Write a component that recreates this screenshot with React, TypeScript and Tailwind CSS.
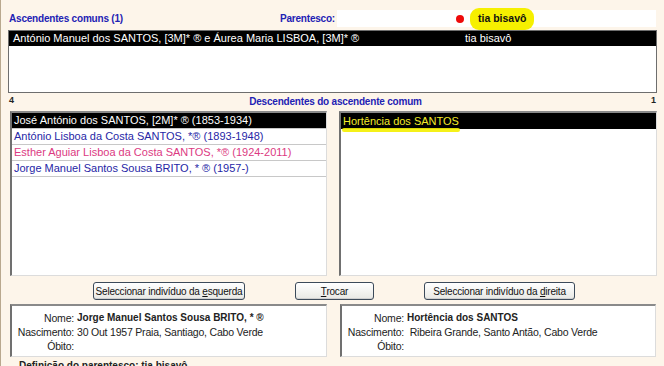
import React from "react";

const font = { fontFamily: '"Liberation Sans", Arial, sans-serif' };

function InfoBox({ name, birth }: { name: string; birth: string }) {
  return (
    <div className="flex h-[53px] flex-col border-l-2 border-t-2 border-r border-b border-l-[#707070] border-t-[#8a8a8a] border-r-[#dcdcdc] border-b-[#dcdcdc] bg-white pt-[5px] text-[10.5px] leading-[14px] tracking-[-0.2px] text-[#222]">
      <div className="flex">
        <span className="w-[62px] shrink-0 text-right">Nome:</span>
        <span className="pl-[3px] text-[10px] font-bold tracking-[0px]">{name}</span>
      </div>
      <div className="flex">
        <span className="w-[62px] shrink-0 text-right">Nascimento:</span>
        <span className="whitespace-pre pl-[3px]">{birth}</span>
      </div>
      <div className="flex">
        <span className="w-[62px] shrink-0 text-right">Óbito:</span>
      </div>
    </div>
  );
}

function Btn({ children, w }: { children: React.ReactNode; w: string }) {
  return (
    <div
      className={`${w} flex h-[18px] items-center justify-center whitespace-nowrap rounded-[3px] border border-[#3c4a5a] bg-gradient-to-b from-white to-[#e8e8e4] text-[10px] tracking-[-0.2px] text-[#111] shadow-[inset_0_-1px_0_#cfcfcf]`}
    >
      {children}
    </div>
  );
}

export default function App() {
  const rows = [
    { t: "José António dos SANTOS, [2M]* ® (1853-1934)", c: "text-white bg-black" },
    { t: "António Lisboa da Costa SANTOS, *® (1893-1948)", c: "text-[#2626a6] bg-white" },
    { t: "Esther Aguiar Lisboa da Costa SANTOS, *® (1924-2011)", c: "text-[#dc3a82] bg-white" },
    { t: "Jorge Manuel Santos Sousa BRITO, * ® (1957-)", c: "text-[#2626a6] bg-white" },
  ];
  return (
    <div
      style={font}
      className="relative h-[366px] w-[664px] overflow-hidden border-l border-l-[#b9a88e] bg-[#fdf5ea]"
    >
      {/* top row */}
      <div className="flex h-[27px] items-end">
        <div className="flex h-[17px] w-[336px] items-center justify-between pl-[8px] pr-[2px] text-[10px] font-bold tracking-[-0.2px] text-[#1e22b4]">
          <span>Ascendentes comuns (1)</span>
          <span>Parentesco:</span>
        </div>
        <div className="relative flex h-[17px] w-[319px] items-center bg-white pl-[119px]">
          <span className="h-[8px] w-[8px] rounded-full bg-[#ee0a0a]" />
          <span className="ml-[6px] flex h-[22px] items-center rounded-[9px] bg-[#f6f000] px-[8px] text-[10.5px] font-bold text-[#111]">
            tia bisavô
          </span>
        </div>
      </div>

      {/* top list */}
      <div className="mx-[7px] mt-[3px] h-[63px] border border-[#6e6e6e] bg-white">
        <div className="flex h-[15px] items-center bg-black text-[11px] text-white">
          <span className="w-[456px] shrink-0 whitespace-nowrap pl-[4px]">
            António Manuel dos SANTOS, [3M]* ® e Áurea Maria LISBOA, [3M]* ®
          </span>
          <span>tia bisavô</span>
        </div>
      </div>

      {/* label row */}
      <div className="mt-[1px] flex h-[14px] items-center justify-between px-[8px] text-[9px] font-bold">
        <span className="text-[#222]">4</span>
        <span className="ml-[6px] text-[10px] tracking-[-0.2px] text-[#1e22b4]">Descendentes do ascendente comum</span>
        <span className="text-[#222]">1</span>
      </div>

      {/* lists */}
      <div className="mt-[3px] flex h-[165px] pl-[9px]">
        <div className="w-[317px] border-l-2 border-t-2 border-r border-b border-l-[#707070] border-t-[#8a8a8a] border-r-[#dcdcdc] border-b-[#dcdcdc] bg-white">
          {rows.map((r) => (
            <div
              key={r.t}
              className={`flex h-[16px] items-center whitespace-nowrap border-b border-[#c8c8c8] pl-[2px] text-[11px] ${r.c}`}
            >
              {r.t}
            </div>
          ))}
        </div>
        <div className="relative ml-[12px] w-[318px] border-l-2 border-t-2 border-r border-b border-l-[#707070] border-t-[#8a8a8a] border-r-[#dcdcdc] border-b-[#dcdcdc] bg-white">
          <div className="flex h-[16px] items-center bg-black pl-[2px] text-[11px] text-[#f4ec2a]">
            Hortência dos SANTOS
          </div>
          <div className="absolute left-[1px] top-[15px] h-[4px] w-[118px] rounded-full bg-[#f4f000] opacity-90" />
        </div>
      </div>

      {/* buttons */}
      <div className="mt-[6px] flex pl-[92px]">
        <Btn w="w-[152px]">
          <span>
            Seleccionar indivíduo da <u>e</u>squerda
          </span>
        </Btn>
        <div className="ml-[50px]">
          <Btn w="w-[79px]">
            <span>
              <u>T</u>rocar
            </span>
          </Btn>
        </div>
        <div className="ml-[50px]">
          <Btn w="w-[151px]">
            <span>
              Seleccionar indivíduo da <u>d</u>ireita
            </span>
          </Btn>
        </div>
      </div>

      {/* info boxes */}
      <div className="mt-[4px] flex pl-[9px]">
        <div className="w-[317px]">
          <InfoBox name="Jorge Manuel Santos Sousa BRITO, * ®" birth="30 Out 1957 Praia, Santiago, Cabo Verde" />
        </div>
        <div className="ml-[13px] w-[316px]">
          <InfoBox name="Hortência dos SANTOS" birth=" Ribeira Grande, Santo Antão, Cabo Verde" />
        </div>
      </div>

      <div className="mt-[2px] pl-[18px] text-[10px] font-bold leading-[14px] text-[#222]">
        Definição do parentesco: tia bisavô
      </div>
    </div>
  );
}
